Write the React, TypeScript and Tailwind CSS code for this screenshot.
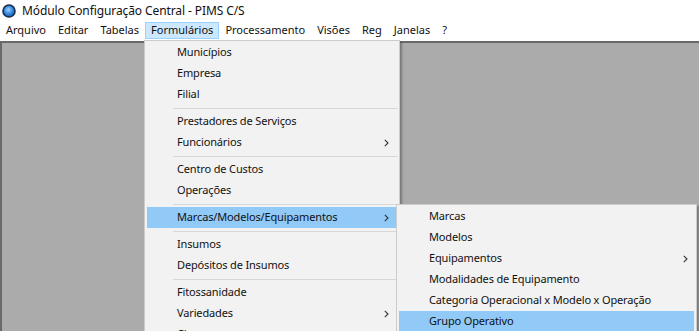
import React from "react";

type Item = { label: string; arrow?: boolean; active?: boolean } | "sep";

const mainItems: Item[] = [
  { label: "Municípios" },
  { label: "Empresa" },
  { label: "Filial" },
  "sep",
  { label: "Prestadores de Serviços" },
  { label: "Funcionários", arrow: true },
  "sep",
  { label: "Centro de Custos" },
  { label: "Operações" },
  "sep",
  { label: "Marcas/Modelos/Equipamentos", arrow: true, active: true },
  "sep",
  { label: "Insumos" },
  { label: "Depósitos de Insumos" },
  "sep",
  { label: "Fitossanidade" },
  { label: "Variedades", arrow: true },
  { label: "Clones" },
];

const subItems: Item[] = [
  { label: "Marcas" },
  { label: "Modelos" },
  { label: "Equipamentos", arrow: true },
  { label: "Modalidades de Equipamento" },
  { label: "Categoria Operacional x Modelo x Operação" },
  { label: "Grupo Operativo", active: true },
];

const menuBar = [
  "Arquivo",
  "Editar",
  "Tabelas",
  "Formulários",
  "Processamento",
  "Visões",
  "Reg",
  "Janelas",
  "?",
];

function Chevron() {
  return (
    <svg width="5" height="8" viewBox="0 0 5 8" className="shrink-0">
      <path d="M0.8 0.8 L4 4 L0.8 7.2" fill="none" stroke="#333" strokeWidth="1.1" />
    </svg>
  );
}

function MenuList({ items, arrowRight }: { items: Item[]; arrowRight: string }) {
  return (
    <div className="flex flex-col py-[1px]">
      {items.map((it, i) =>
        it === "sep" ? (
          <div key={i} className="h-[6px] flex items-center pl-[28px] pr-[1px]">
            <div className="h-px w-full bg-[#d7d7d7]" />
          </div>
        ) : (
          <div
            key={i}
            className={
              "h-[21px] mx-[2px] flex items-center pl-[30px] " +
              arrowRight +
              " " +
              (it.active ? "bg-[#91c9f7]" : "")
            }
          >
            <span className="flex-1 whitespace-nowrap">{it.label}</span>
            {it.arrow && <Chevron />}
          </div>
        )
      )}
    </div>
  );
}

export default function App() {
  return (
    <div
      className="relative w-[699px] h-[331px] overflow-hidden bg-white text-[11px] tracking-[-0.15px] text-[#111]"
      style={{ fontFamily: '"Noto Sans", "Open Sans", sans-serif' }}
    >
      {/* title bar */}
      <div className="h-[21px] flex items-center pl-[2px] text-[12px] tracking-[-0.1px]">
        <svg width="14" height="14" viewBox="0 0 14 14" className="mr-[6px]">
          <defs>
            <radialGradient id="g" cx="0.45" cy="0.4" r="0.6">
              <stop offset="0" stopColor="#9fd0ff" />
              <stop offset="0.6" stopColor="#2f86e0" />
              <stop offset="1" stopColor="#1d5fb0" />
            </radialGradient>
          </defs>
          <circle cx="7" cy="7" r="6" fill="url(#g)" stroke="#1b2b4a" strokeWidth="1.6" />
        </svg>
        <span className="leading-none">Módulo Configuração Central - PIMS C/S</span>
      </div>
      {/* menu bar */}
      <div className="h-[19px] flex items-center tracking-[0px]">
        {menuBar.map((m) => (
          <div
            key={m}
            className={
              "h-[17px] flex items-center px-[5px] border " +
              (m === "Formulários"
                ? "bg-[#cce8ff] border-[#99d1ff]"
                : "border-transparent")
            }
          >
            {m}
          </div>
        ))}
      </div>
      {/* MDI area */}
      <div className="h-[291px] mt-[1px] border-t-2 border-l-2 border-[#696969] bg-[#ababab]" />

      {/* dropdown */}
      <div className="absolute left-[144px] top-[40px] w-[256px] h-[300px] bg-[#f2f2f2] border border-[#cccccc] shadow-[2px_2px_2px_rgba(0,0,0,0.3)]">
        <MenuList items={mainItems} arrowRight="pr-[8px]" />
      </div>

      {/* submenu */}
      <div className="absolute left-[396px] top-[204px] w-[301px] h-[140px] bg-[#f2f2f2] border border-[#cccccc] shadow-[2px_2px_2px_rgba(0,0,0,0.3)]">
        <MenuList items={subItems} arrowRight="pr-[6px]" />
      </div>
    </div>
  );
}
